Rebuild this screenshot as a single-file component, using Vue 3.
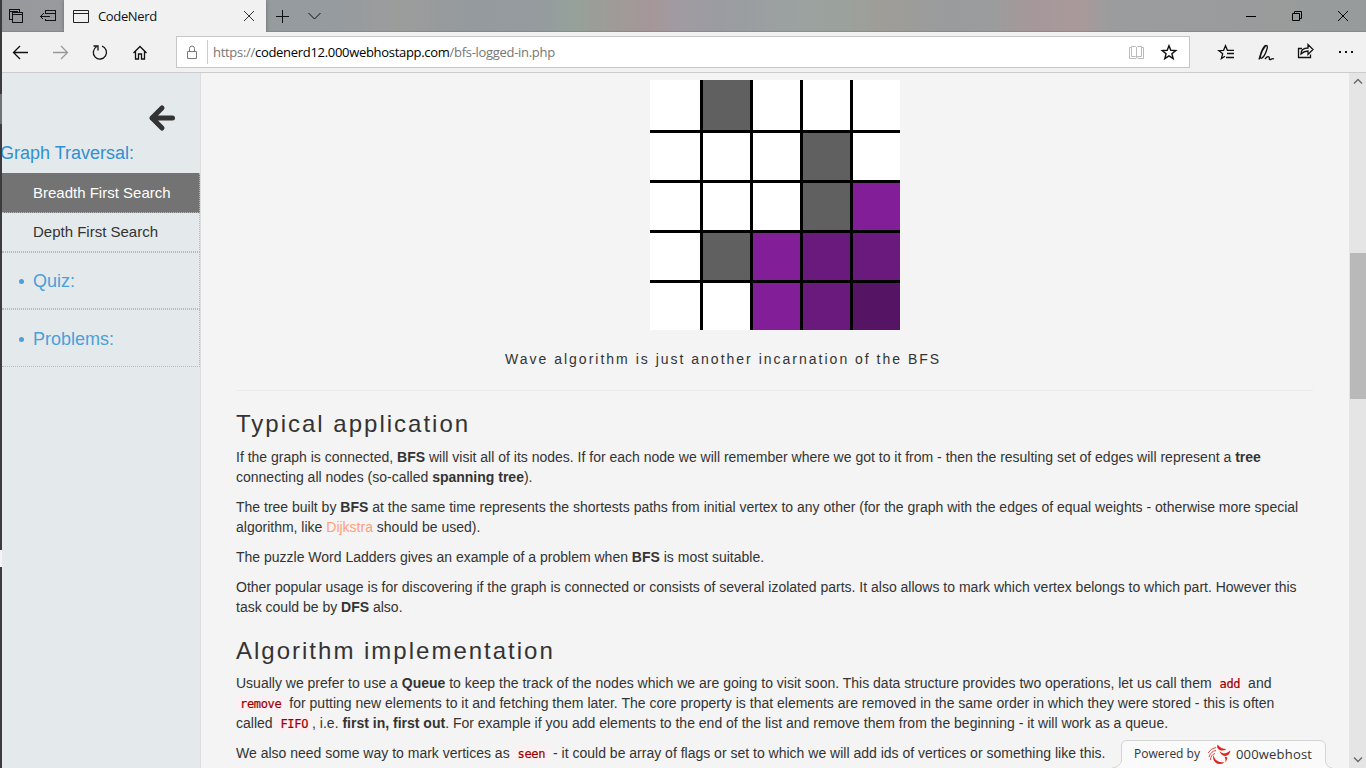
<script setup>
const cells = [
  'w', 'g', 'w', 'w', 'w',
  'w', 'w', 'w', 'g', 'w',
  'w', 'w', 'w', 'g', 'p1',
  'w', 'g', 'p1', 'p2', 'p2',
  'w', 'w', 'p1', 'p2', 'p3',
]
</script>

<template>
  <div class="screen">
    <div class="desk"><i class="seam"></i><i class="notch"></i></div>
    <div class="browser">
      <header class="tabs">
        <div class="tabtools">
          <svg width="62" height="32" viewBox="2 0 62 32" fill="none" stroke="#111" shape-rendering="crispEdges">
            <path d="M12.500 19.500h-3v-10h10v2M9.500 11.500h8M13.500 12.500h9v10h-10v-10zM12.500 14.500h10" />
            <path d="M45.500 14v-3.500h10v10h-10v-2M45.500 13.500h10M40.500 16.500h9M43.500 13.500l-3 3 3 3" />
          </svg>
        </div>
        <div class="tab">
          <svg class="page" width="18" height="14" viewBox="0 0 18 14" fill="none" stroke="#222"><path d="M1.500 .5h15v12h-15zM1.500 3.500h15" /></svg>
          <span class="tabname">CodeNerd</span>
          <svg class="close" width="12" height="12" viewBox="0 0 12 12" stroke="#333" fill="none"><path d="M1 1l10 10M11 1L1 11" /></svg>
        </div>
        <svg class="newtab" width="60" height="32" viewBox="266 0 60 32" fill="none" stroke="#111"><path d="M276 16.500h13M282.500 10v13" /><path d="M308.500 13l6 6 6-6" /></svg>
        <svg class="wincontrols" width="126" height="32" viewBox="1240 0 126 32" fill="none" stroke="#000">
          <path d="M1246 16.500h10M1292.500 13.500h7v7h-7zM1294.500 13.500v-2h7v7h-2M1338 11l10 10M1348 11l-10 10" />
        </svg>
      </header>
      <nav class="toolbar">
        <svg class="navicons" width="174" height="40" viewBox="2 32 174 40" fill="none" stroke="#111" stroke-width="1.300">
          <path d="M28 52.500H13.500M20 46l-6.500 6.500 6.500 6.500" />
          <path stroke="#999" d="M53 52.500h14.500M61 46l6.500 6.500-6.500 6.500" />
          <path d="M102 46.200a6.600 6.600 0 1 1-5.500.6M93.500 46h4.500v4.500" />
          <path d="M133.500 53l6.500-6.500 6.500 6.500M135.500 51.500v7.500h3v-5h3v5h3v-7.500" />
        </svg>
        <div class="address">
          <svg width="30" height="30" viewBox="177 37 30 30" fill="none" stroke="#777"><path d="M187.500 51.500h9v7h-9zM189.500 51.500v-3a2.500 2.500 0 0 1 5 0v3" /></svg>
          <div class="url">https://<b>codenerd12.000webhostapp.com</b>/bfs-logged-in.php</div>
          <svg class="fav" width="66" height="30" viewBox="1123 37 66 30" fill="none">
            <path stroke="#bbb" d="M1131.500 47.500h-2v11h6.500l1-1 1 1h5.500v-11h-2M1131.500 46.500h4l1 1 1-1h4v10h-4l-1 1-1-1h-4zM1136.500 47.500v10" />
            <path stroke="#111" stroke-width="1.400" d="M1169 45.700l1.800 4.600 5 .3-3.900 3.100 1.300 4.900-4.200-2.700-4.200 2.700 1.300-4.900-3.900-3.100 5-.3z" />
          </svg>
        </div>
        <svg class="actions" width="176" height="40" viewBox="1190 32 176 40" fill="none" stroke="#111" stroke-width="1.300">
          <path d="M1225 56.200l-3.600 2.400 1.300-4.900-3.900-3.100 4.800-.3 1.900-4.600 1.900 4.600h6.600M1227 53.500h7M1226 57.500h8" />
          <path d="M1259 59.500l1.500-5c1-4 3.500-9 5.500-9s1.500 2 .5 5-3 6.500-4.500 7.500-2-.5-1-4 3-6 4.500-8M1265 59c1.500-2 3-3 4-2s-.5 2.500 1 2.500 2-1.500 4-.5" />
          <path d="M1302 48.500h-3.500v9h12v-3M1301 54c0-4 3-6 7-6v-3.500l5 5-5 5V51c-3 0-5 1-7 3z" />
          <path stroke="none" fill="#111" d="M1339 51h2v2h-2zM1345 51h2v2h-2zM1351 51h2v2h-2z" />
        </svg>
      </nav>
      <main class="viewport">
        <aside class="side">
          <svg class="back" width="28" height="28" viewBox="0 0 28 28" fill="none" stroke="#333"><path stroke-width="5" stroke-linecap="round" stroke-linejoin="round" d="M14 4L4 14l10 10M4 14h20.500" /></svg>
          <h4 class="group">Graph Traversal:</h4>
          <ul class="menu">
            <li class="item active">Breadth First Search</li>
            <li class="item">Depth First Search</li>
            <li class="item big"><i class="dot"></i>Quiz:</li>
            <li class="item big"><i class="dot"></i>Problems:</li>
          </ul>
        </aside>
        <article class="doc">
          <div class="board">
            <i v-for="(c, n) in cells" :key="n" :class="c"></i>
          </div>
          <p class="caption">Wave algorithm is just another incarnation of the BFS</p>
          <hr />
          <h2>Typical application</h2>
          <p>If the graph is connected, <b>BFS</b> will visit all of its nodes. If for each node we will remember where we got to it from - then the resulting set of edges will represent a <b>tree</b><br />connecting all nodes (so-called <b>spanning tree</b>).</p>
          <p>The tree built by <b>BFS</b> at the same time represents the shortests paths from initial vertex to any other (for the graph with the edges of equal weights - otherwise more special<br />algorithm, like <a>Dijkstra</a> should be used).</p>
          <p>The puzzle Word Ladders gives an example of a problem when <b>BFS</b> is most suitable.</p>
          <p>Other popular usage is for discovering if the graph is connected or consists of several izolated parts. It also allows to mark which vertex belongs to which part. However this<br />task could be by <b>DFS</b> also.</p>
          <h2 class="second">Algorithm implementation</h2>
          <p>Usually we prefer to use a <b>Queue</b> to keep the track of the nodes which we are going to visit soon. This data structure provides two operations, let us call them <code>add</code> and<br /><code>remove</code> for putting new elements to it and fetching them later. The core property is that elements are removed in the same order in which they were stored - this is often<br />called <code>FIFO</code>, i.e. <b>first in, first out</b>. For example if you add elements to the end of the list and remove them from the beginning - it will work as a queue.</p>
          <p>We also need some way to mark vertices as <code>seen</code> - it could be array of flags or set to which we will add ids of vertices or something like this.</p>
        </article>
        <div class="scroll">
          <svg width="17" height="17" viewBox="0 0 17 17" fill="none" stroke="#666" stroke-width="1.300"><path d="M5 10.500l4-4 4 4" /></svg>
          <div class="thumb"></div>
          <svg class="down" width="17" height="17" viewBox="0 0 17 17" fill="none" stroke="#666" stroke-width="1.300"><path d="M5 6.500l4 4 4-4" /></svg>
        </div>
        <div class="host">
          <svg class="hostbg" width="222" height="30" viewBox="0 0 222 30"><path d="M0 29.500Q9 28 10.500 22V7Q10.500 1.500 16 1.500H208Q214.500 1.500 214.500 7V22Q215 28 222 29.500" fill="#fafafa" stroke="#d4d4d4" /></svg>
          <span class="powered">Powered by</span>
          <svg class="logo" width="24" height="22" viewBox="0 0 24 22" fill="#e0251b">
            <path d="M10.500 1.500Q9 6 14 7.500q3 .5 5.500-1.500Q14 6 10.500 1.500z" />
            <path d="M12.500 8q4 5 11-.5-1 5-5.500 5.500-4-.5-5.500-5z" />
            <path d="M17.500 13.500q2.500 0 3 1.500l-2 4.500q.5-3.500-1-6z" />
            <path d="M6.500 12q.5 5 6 7l5 .5q-5 3-9 0-3.500-3-2-7.500z" />
            <path d="M9 4.500Q4 5 1 10M9 7.500Q4 8 2 14M8 10.500Q3.500 12 3.500 17" fill="none" stroke="#e34b40" stroke-width="1" />
          </svg>
          <span class="brand">000webhost</span>
        </div>
      </main>
    </div>
  </div>
</template>

<style>
body { margin: 0; overflow: hidden; }
</style>
<style scoped>
* { box-sizing: border-box; }
svg { display: block; flex: none; }
.screen { width: 1366px; height: 768px; display: flex; overflow: hidden; font-family: "Liberation Sans", Arial, sans-serif; color: #333; }
.desk { width: 2px; background: #3c3c3e; display: flex; flex-direction: column; }
.seam { height: 30px; margin-top: 94px; background: #707174; }
.notch { height: 17px; margin-top: 426px; background: #f4f4f4; }
.browser { width: 1364px; display: flex; flex-direction: column; }
.tabs { height: 32px; display: flex; background: linear-gradient(90deg, #97999d 0, #999b9d 200px, #959ba0 315px, #9c9c9c 400px, #949a9d 470px, #959b9e 535px, #96a19a 570px, #9e9b98 610px, #a59799 648px, #a09ba2 680px, #9a9ca1 720px, #9ca2a0 800px, #9ba29d 840px, #9f9d98 880px, #999b9d 950px, #9b9c9d 990px, #a6989a 1030px, #a9999b 1080px, #9b9c9d 1110px, #989b9b 1364px); box-shadow: inset 0 -1px 1px #0000001f; }
.tab { width: 202px; background: #f1f1f1; display: flex; align-items: center; padding: 0 11px 0 8px; box-shadow: 0 0 4px #0005; clip-path: inset(0 -5px 0 -5px); }
.page { margin-top: 1px; }
.tabname { margin-left: 8px; font: 13px/16px "Open Sans", sans-serif; color: #111; letter-spacing: -0.350px; }
.close { margin-left: auto; }
.wincontrols { margin-left: auto; }
.toolbar { height: 41px; background: #f1f1f1; border-bottom: 1px solid #ccc; display: flex; }
.address { width: 1014px; height: 32px; margin-top: 4px; border: 1px solid #c6c6c6; background: #fff; display: flex; align-items: center; }
.url { height: 24px; border-left: 1px solid #ccc; padding-left: 5px; font: 13px/25px "Open Sans", sans-serif; letter-spacing: -0.300px; color: #767676; white-space: nowrap; }
.url b { font-weight: 400; color: #000; }
.fav { margin-left: auto; }
.viewport { height: 695px; display: flex; position: relative; overflow: hidden; background: #f4f4f4; }
.side { width: 199px; flex: none; background: #e4eaec; border-right: 1px solid #ddd; }
.back { margin: 31px 0 0 146px; }
.group { font-size: 18px; line-height: 20px; font-weight: 400; color: #318fd1; margin: 11px 0 10px -2px; white-space: nowrap; }
.menu { list-style: none; margin: 0; padding: 0; }
.item { height: 39px; padding-left: 31px; font-size: 15px; line-height: 38px; border-bottom: 1px dotted #b5b9bb; border-right: 1px dotted #b5b9bb; position: relative; color: #333; white-space: nowrap; }
.item.active { height: 40px; line-height: 40px; background: #727372; color: #fff; }
.item.big { height: 57px; line-height: 56px; font-size: 18px; color: #4ba0d8; border-top: 1px dotted #b5b9bb; }
.item.big + .big { height: 58px; line-height: 58px; }
.dot { position: absolute; left: 17px; top: 26px; width: 5px; height: 5px; border-radius: 50%; background: #4ba0d8; }
.big + .big .dot { top: 27px; }
.doc { width: 1148px; flex: none; padding: 7px 0 0 35px; font-size: 14px; line-height: 20px; }
.board { width: 250px; height: 250px; margin-left: 414px; display: grid; grid-template-columns: 50px repeat(4, 47px); grid-template-rows: 50px repeat(4, 47px); gap: 3px; background: #000; }
.w { background: #fff; }
.g { background: #606060; }
.p1 { background: #821e97; }
.p2 { background: #6a1a7d; }
.p3 { background: #561464; }
.doc p { margin: 0 0 10px; white-space: nowrap; }
.doc p.caption { margin: 19px 0 21px 269px; letter-spacing: 2px; }
hr { width: 1077px; border: 0; border-top: 1px solid #ebebeb; margin: 0; }
h2 { font-size: 24px; line-height: 26px; font-weight: 400; letter-spacing: 2px; margin: 20px 0 10px; }
h2.second { margin: 21px 0 9px; }
.doc a { color: #ffa07a; }
code { font: 12px/17px "DejaVu Sans Mono", monospace; color: #900; background: #fdf0f3; border-radius: 4px; padding: 1px 4px; letter-spacing: -0.320px; -webkit-text-stroke: 0.200px #900; }
.scroll { width: 17px; background: #e5e5e5; flex: none; display: flex; flex-direction: column; }
.thumb { margin: 163px 0 0 1px; height: 146px; background: #b9b9b9; }
.down { margin-top: auto; }
.host { position: absolute; left: 1109px; bottom: -1px; width: 222px; height: 30px; display: flex; align-items: center; padding-left: 23px; }
.hostbg { position: absolute; left: 0; top: 0; }
.powered, .brand, .logo { position: relative; }
.powered { font: 12px/20px "Open Sans", sans-serif; white-space: nowrap; }
.logo { margin-left: 7px; }
.brand { font: 500 13px/20px "Open Sans", sans-serif; margin-left: 5px; letter-spacing: 0.200px; }
</style>
